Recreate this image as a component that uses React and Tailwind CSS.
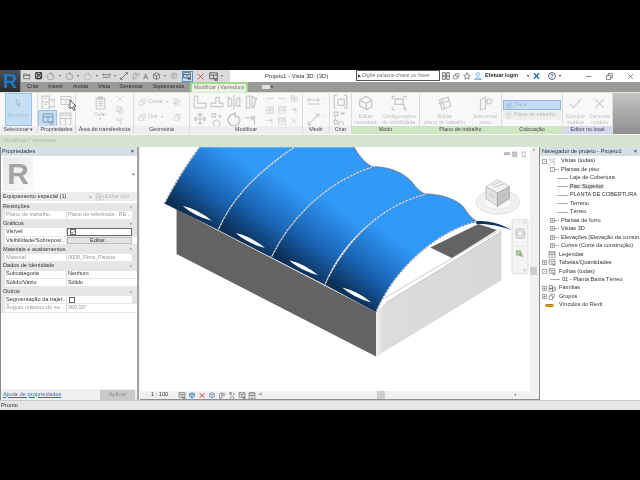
import React from 'react';

// tiny stroked glyph, most of the ribbon is greyed out
function Sk({ w = 12, h = 12, vb = '0 0 12 12', d, stroke = '#c8c8c8', fill = 'none', sw = 1 }) {
  return (
    <svg width={w} height={h} viewBox={vb} className="shrink-0 block">
      <path d={d} stroke={stroke} fill={fill} strokeWidth={sw} />
    </svg>
  );
}

const D = {
  docs: 'M1 1h6v5h-6zM7 4h5v6h-5zM1 6h6v6h-6zM3 3h2M3 8h2M9 6h2',
  panel: 'M1 1h10v8h-10zM1 4h10M6 4v5M8 9h3v3h-3z',
  grid: 'M1 1h10v11h-10zM1 6h10M6 6v6M1 3h10',
  paste: 'M2 2h8v10h-8zM4 1h4v2h-4zM4 5h4M4 7h4M4 9h4',
  cut: 'M2 2l8 8M10 2l-8 8',
  copy: 'M1 1h6v7h-6zM4 4h6v7h-6z',
  brush: 'M2 2h7v3h-7zM5 5v2l3 1-1 4',
  shapes: 'M1 5h6v6h-6zM4 5v-3h6v6h-3',
  align: 'M1 1h3v6h7v4h-10z',
  offset: 'M1 10v-3h4v-5h3v5h3v3z',
  mirror: 'M6 0v12M1 2l3 2v5l-3 1zM11 2l-3 2v5l3 1z',
  split: 'M2 1h3v10h-3zM7 1l3 2-1 7-2 1zM8 11l3-9',
  move: 'M6 1v10M1 6h10M6 1l-2 2M6 1l2 2M6 11l-2-2M6 11l2-2M1 6l2-2M1 6l2 2M11 6l-2-2M11 6l-2 2',
  copy2: 'M2 1h3v3h-3zM8 2l2 2-2 0M6 7a3 3 0 1 0 .1 0z',
  rotate: 'M10 4a5 5 0 1 1-3-2M7 0v4h3',
  trim: 'M1 5h8M9 3v8M6 3l3 2-3 2',
  arrows: 'M1 6h10M1 6l2-2M1 6l2 2M11 6l-2-2M11 6l-2 2',
  mini: 'M1 1h4v10h-4zM7 1h4v10h-4zM1 6h4M7 6h4',
  x: 'M2 2l8 8M10 2l-8 8',
  measure: 'M0 4h12M0 4l2-2M0 4l2 2M12 4l-2-2M12 4l-2 2M0 8h12',
  diag: 'M1 11l10-10M1 8v3h3M8 1h3v3',
  comp: 'M1 1h2M9 1h2M1 1v10M11 1v10M1 11h2M9 11h2M4 4h5v5h-5z',
  create: 'M1 1h3v3h-3zM6 2h4M8 1l2 1-2 1M2 5v3M1 8h3v3h-3zM7 9a2 2 0 1 0 .1 0z',
  sweep: 'M2 4l5-3 4 3v5l-4 2-5-3zM2 4l5 2 4-2M7 6v5',
  vis: 'M1 3v-2h2M9 1h2v2M1 9v2h2M3 3h6v4h-6zM9 6l2 5-2-1',
  plane: 'M2 3l7-2 2 7-7 3zM4 2l2 8M1 6l9-2',
  selnew: 'M2 3l4-2v9l-4 1zM7 4a2 2 0 1 1 3 2 2 2 0 0 1-3-2z',
  folder: 'M1 3h3l1 1h5v6h-9zM1 5h9',
  save: 'M1 1h9v9h-9zM3 1v3h5v-3M3 6h5v4h-5z',
  cube: 'M6 1l4 2v5l-4 2-4-2v-5zM2 3l4 2 4-2M6 5v5',
};

const tabs = ['Criar', 'Inserir', 'Anotar', 'Vista', 'Gerenciar', 'Suplementos'];

function Panel({ w, label, tint = 'bg-[#eeeeee]', children }) {
  return (
    <div className={`${w} shrink-0 flex flex-col border-r border-[#dcdcdc]`}>
      <div className="h-[34px] flex overflow-hidden">{children}</div>
      <div className={`${tint} h-[8px] flex items-center justify-center text-[#4a4a4a] text-[5.4px] whitespace-nowrap`}>{label}</div>
    </div>
  );
}

function BigBtn({ d, l1, l2, w = 'w-[34px]', size = 14 }) {
  return (
    <div className={`${w} flex flex-col items-center text-[#bdbdbd] text-[5.3px] leading-[6px] whitespace-nowrap`}>
      <div className="h-[20px] flex items-center"><Sk w={size} h={size} d={d} /></div>
      <div>{l1}</div>
      <div>{l2}</div>
    </div>
  );
}

function Ribbon() {
  return (
    <div className="h-[42px] flex bg-[#f8f8f8] border-t border-[#d9e8cf]">
      <Panel w="w-[38px]" label="Selecionar ▾">
        <div className="mx-[5px] w-[28px] h-[33px] bg-[#c5def6] border border-[#98c2ea] flex flex-col items-center pt-[4px] gap-[5px] text-[#a9bfd4] text-[5.2px]">
          <Sk w={9} h={10} d="M3 1v8l2-2 2 4 1-1-2-3h3z" stroke="#9db4c9" />
          <span>Modificar</span>
        </div>
      </Panel>
      <Panel w="w-[38px]" label="Propriedades">
        <div className="grid grid-cols-[19px_17px] grid-rows-[17px_17px] w-full">
          <div className="flex justify-center items-center"><Sk w={14} h={14} d={D.docs} /></div>
          <div className="flex justify-center items-center"><Sk w={12} h={13} d={D.panel} /></div>
          <div className="bg-[#c5def6] border border-[#98c2ea] flex justify-center items-center"><Sk w={12} h={12} d={D.panel} stroke="#7e97ad" /></div>
          <div className="flex justify-center items-center"><Sk w={13} h={13} d={D.grid} /></div>
        </div>
      </Panel>
      <Panel w="w-[58px]" label="Área de transferência">
        <div className="w-[38px] pl-[10px] text-[#bbb] text-[5.3px] flex flex-col items-center pt-[1px]">
          <Sk w={13} h={17} d={D.paste} />
          <span className="mt-[1px]">Colar</span>
          <span className="text-[4px]">▾</span>
        </div>
        <div className="flex flex-col gap-[3px] pt-[2px] pl-[2px]">
          <Sk w={8} h={8} d={D.cut} />
          <Sk w={8} h={8} d={D.copy} />
          <Sk w={8} h={8} d={D.brush} />
        </div>
      </Panel>
      <Panel w="w-[56px]" label="Geometria">
        <div className="flex flex-col gap-[7px] pt-[5px] pl-[4px] text-[#bbb] text-[5.4px] w-[36px]">
          <div className="flex items-center gap-[1px]"><Sk w={9} h={8} d={D.shapes} /><span>Cortar</span><span className="text-[4px] ml-[2px]">▾</span></div>
          <div className="flex items-center gap-[1px]"><Sk w={9} h={8} d={D.shapes} /><span>Unir</span><span className="text-[4px] ml-[2px]">▾</span></div>
        </div>
        <div className="flex flex-col gap-[7px] pt-[5px] pl-[3px]">
          <Sk w={8} h={8} d={D.copy} />
          <Sk w={9} h={8} d={D.shapes} />
        </div>
      </Panel>
      <Panel w="w-[113px]" label="Modificar">
        <div className="grid grid-cols-[repeat(4,17px)] gap-y-[2px] pl-[3px] pt-[2px] w-[72px]">
          <Sk w={14} h={14} d={D.align} />
          <Sk w={14} h={14} d={D.offset} />
          <Sk w={14} h={14} d={D.mirror} />
          <Sk w={14} h={14} d={D.split} />
          <Sk w={14} h={14} d={D.move} />
          <Sk w={13} h={14} d={D.copy2} />
          <Sk w={14} h={14} d={D.rotate} sw={1.4} />
          <Sk w={14} h={14} d={D.trim} />
        </div>
        <div className="grid grid-cols-[repeat(3,12px)] gap-y-[3px] pl-[4px] pt-[2px]">
          <Sk w={8} h={7} d={D.arrows} />
          <Sk w={8} h={7} d={D.arrows} />
          <Sk w={8} h={7} d={D.docs} />
          <Sk w={8} h={8} d={D.mini} />
          <Sk w={8} h={8} d={D.grid} />
          <Sk w={8} h={8} d={D.trim} />
          <Sk w={8} h={8} d={D.trim} />
          <Sk w={8} h={8} d={D.grid} />
          <Sk w={8} h={8} d={D.x} />
        </div>
      </Panel>
      <Panel w="w-[27px]" label="Medir">
        <div className="flex flex-col gap-[5px] pl-[3px] pt-[3px]">
          <div className="flex gap-[1px]"><Sk w={15} h={12} d={D.measure} /><span className="text-[5px] text-[#999]">-</span></div>
          <div className="flex gap-[1px]"><Sk w={15} h={13} d={D.diag} /><span className="text-[5px] text-[#999]">-</span></div>
        </div>
      </Panel>
      <Panel w="w-[22px]" label="Criar">
        <div className="flex flex-col gap-[2px] pl-[3px] pt-[1px]">
          <Sk w={15} h={15} d={D.comp} />
          <Sk w={14} h={14} d={D.create} />
        </div>
      </Panel>
      <Panel w="w-[68px]" label="Modo" tint="bg-[#cfe6c3]">
        <BigBtn d={D.sweep} l1="Editar" l2="varredura" w="w-[27px]" size={16} />
        <BigBtn d={D.vis} l1="Configurações" l2="de visibilidade" w="w-[41px]" size={16} />
      </Panel>
      <Panel w="w-[82px]" label="Plano de trabalho" tint="bg-[#cfe6c3]">
        <BigBtn d={D.plane} l1="Editar" l2="plano de trabalho" w="w-[50px]" size={15} />
        <BigBtn d={D.selnew} l1="Selecionar" l2="novo" w="w-[32px]" size={15} />
      </Panel>
      <Panel w="w-[61px]" label="Colocação" tint="bg-[#cfe6c3]">
        <div className="flex flex-col w-full pt-[7px] pl-[1px] pr-[1px] text-[5.3px] whitespace-nowrap">
          <div className="h-[10px] bg-[#c3dcf3] border border-[#8cb8e0] flex items-center gap-[2px] pl-[2px] text-[#9cb4c8]">
            <Sk w={7} h={7} d={D.plane} stroke="#9cb4c8" /><span>Face</span>
          </div>
          <div className="h-[10px] bg-[#efefef] flex items-center gap-[2px] pl-[2px] text-[#b8b8b8]">
            <Sk w={7} h={7} d={D.cube} /><span>Plano de trabalho</span>
          </div>
        </div>
      </Panel>
      <Panel w="w-[50px]" label="Editor no local" tint="bg-[#d5d9ef]">
        <BigBtn d="M1 6l3 4 7-8" l1="Concluir" l2="modelo" w="w-[25px]" size={13} />
        <BigBtn d={D.x} l1="Cancelar" l2="modelo" w="w-[25px]" size={13} />
      </Panel>
      <div className="flex-1 bg-gradient-to-b from-[#c4c4c4] to-[#8f8f8f]" />
    </div>
  );
}

const props = [
  { head: 'Restrições' },
  { k: 'Plano de trabalho', v: 'Plano de referência : RE...', dim: true },
  { head: 'Gráficos' },
  { k: 'Visível', check: true, on: true, active: true },
  { k: 'Visibilidade/Sobreposi...', button: 'Editar...' },
  { head: 'Materiais e acabamentos' },
  { k: 'Material', v: '0008_Fibra_Piscina', dim: true },
  { head: 'Dados de identidade' },
  { k: 'Subcategoria', v: 'Nenhum' },
  { k: 'Sólido/Vazio', v: 'Sólido' },
  { head: 'Outros' },
  { k: 'Segmentação da trajet...', check: true },
  { k: 'Ângulo máximo do se...', v: '360,00°', dim: true },
];

function Properties() {
  return (
    <div className="w-[137px] shrink-0 bg-white border-l border-[#8a8a8a] flex flex-col">
      <div className="h-[9px] bg-[#d5dfe6] flex items-center justify-between px-[1px] pr-[3px] text-[#333] text-[5.6px]">
        <span>Propriedades</span><span className="font-bold">×</span>
      </div>
      <div className="h-[36px] flex justify-between items-center pr-[2px]">
        <div className="w-[30px] h-[34px] ml-[2px] bg-gradient-to-br from-[#e8e8e8] to-[#fafafa] flex items-center justify-center text-[#a3a3a3] text-[30px] font-bold leading-none">R</div>
        <span className="text-[5px] text-[#777]">▾</span>
      </div>
      <div className="h-[9px] bg-[#ececec] flex items-center text-[5.6px] text-[#333] pl-[2px] whitespace-nowrap">
        <div className="w-[92px] flex justify-between pr-[2px]"><span>Equipamento especial (1)</span><span className="text-[#777]">⌄</span></div>
        <Sk w={9} h={8} d={D.docs} />
        <span className="ml-[1px] text-[#b5b5b5] text-[5.3px]">Editar tipo</span>
      </div>
      <div className="mt-[2px] flex flex-col text-[5.6px] text-[#333] whitespace-nowrap">
        {props.map((r) => r.head ? (
          <div key={r.head} className="h-[8.44px] bg-[#e6e6e6] flex items-center justify-between pl-[2px] pr-[5px]">
            <span>{r.head}</span><span className="text-[4px]">≈</span>
          </div>
        ) : (
          <div key={r.k} className="h-[8.44px] grid grid-cols-[4px_62px_65px_1fr] border-b border-[#e8e8e8]">
            <div className="bg-[#e6e6e6]" />
            <div className={`${r.dim ? 'text-[#9a9a9a]' : ''} overflow-hidden pl-[1px] border-r border-[#dcdcdc] flex items-center`}>{r.k}</div>
            {r.button ? (
              <div className="bg-[#e3e3e3] border border-[#bdbdbd] flex items-center justify-center">{r.button}</div>
            ) : (
              <div className={`${r.dim ? 'text-[#9a9a9a]' : ''} ${r.active ? 'border border-[#666]' : ''} overflow-hidden pl-[1px] tracking-[-0.12px] flex items-center`}>
                {r.check ? (
                  <span className="w-[6px] h-[6px] ml-[1px] bg-white border border-[#666] block">
                    {r.on && <Sk w={4} h={4} d="M1 6l3 4 7-8" stroke="#333" sw={2} />}
                  </span>
                ) : r.v}
              </div>
            )}
            <div className={r.k === 'Plano de trabalho' || r.k === 'Material' || r.k === 'Visível' || r.k.startsWith('Seg') ? 'bg-[#e2e2e2]' : 'bg-white'} />
          </div>
        ))}
      </div>
      <div className="flex-1" />
      <div className="h-[11px] bg-[#f0f0f0] flex items-center justify-between pl-[2px] pr-[2px] text-[5.8px]">
        <span className="text-[#2a73c4] underline">Ajuda de propriedades</span>
        <span className="w-[35px] h-[10px] bg-[#c9c9c9] text-[#8f8f8f] flex items-center justify-center">Aplicar</span>
      </div>
    </div>
  );
}

function Exp({ sign, cls }) {
  return (
    <span className={`${cls} w-[5px] h-[5px] border border-[#aaa] bg-white shrink-0 flex items-center justify-center text-[#555] text-[5px] leading-none`}>{sign}</span>
  );
}

const tree = [
  { lead: 'w-[21px]', exp: '-', ml: 'ml-[2px]', d: D.vis, text: 'Vistas (todas)' },
  { lead: 'w-[21px]', exp: '-', ml: 'ml-[10px]', dash: true, text: 'Plantas de piso' },
  { lead: 'w-[30px]', line: 'ml-[17px] w-[11px]', text: 'Laje de Cobertura' },
  { lead: 'w-[30px]', line: 'ml-[17px] w-[11px]', text: 'Pav. Superior', sel: true },
  { lead: 'w-[30px]', line: 'ml-[17px] w-[11px]', text: 'PLANTA DE COBERTURA' },
  { lead: 'w-[30px]', line: 'ml-[17px] w-[11px]', text: 'Terreno' },
  { lead: 'w-[30px]', line: 'ml-[17px] w-[11px]', text: 'Térreo' },
  { lead: 'w-[21px]', exp: '+', ml: 'ml-[10px]', dash: true, text: 'Plantas de forro' },
  { lead: 'w-[21px]', exp: '+', ml: 'ml-[10px]', dash: true, text: 'Vistas 3D' },
  { lead: 'w-[21px]', exp: '+', ml: 'ml-[10px]', dash: true, text: 'Elevações (Elevação da construção)' },
  { lead: 'w-[21px]', exp: '+', ml: 'ml-[10px]', dash: true, text: 'Cortes (Corte da construção)' },
  { lead: 'w-[19px]', spacer: true, d: D.grid, dark: true, text: 'Legendas' },
  { lead: 'w-[19px]', exp: '+', ml: 'ml-[2px]', d: D.panel, dark: true, text: 'Tabelas/Quantidades' },
  { lead: 'w-[19px]', exp: '-', ml: 'ml-[2px]', d: D.panel, dark: true, text: 'Folhas (todas)' },
  { lead: 'w-[22px]', line: 'ml-[10px] w-[10px]', text: '01 - Planta Baixa Térreo' },
  { lead: 'w-[19px]', exp: '+', ml: 'ml-[2px]', d: D.docs, dark: true, text: 'Famílias' },
  { lead: 'w-[19px]', exp: '+', ml: 'ml-[2px]', d: D.shapes, dark: true, text: 'Grupos' },
  { lead: 'w-[19px]', link: true, text: 'Vínculos do Revit' },
];

function Browser() {
  return (
    <div className="flex-1 bg-white border-l border-[#8a8a8a] flex flex-col overflow-hidden">
      <div className="h-[9px] bg-[#d5dfe6] flex items-center justify-between pl-[2px] pr-[3px] text-[#333] text-[5.6px] whitespace-nowrap">
        <span>Navegador de projeto - Projeto1</span><span className="font-bold">×</span>
      </div>
      <div className="pt-[1px] text-[5.6px] text-[#333] whitespace-nowrap">
        {tree.map((r) => (
          <div key={r.text} className="h-[8.47px] flex items-center">
            <div className={`${r.lead} shrink-0 flex items-center overflow-hidden`}>
              {r.exp && <Exp sign={r.exp} cls={r.ml} />}
              {r.spacer && <span className="w-[7px] shrink-0" />}
              {r.dash && <span className="w-[4px] border-t border-dotted border-[#999] shrink-0" />}
              {r.line && <span className={`${r.line} border-t border-[#aaa] shrink-0`} />}
              {r.d && <span className="ml-[1px] shrink-0"><Sk w={8} h={7} d={r.d} stroke={r.dark ? '#666' : '#999'} /></span>}
              {r.link && (
                <span className="ml-[5px] w-[9px] h-[3px] bg-[#e0a920] border border-[#a87f14] rounded-full shrink-0" />
              )}
            </div>
            <span className={r.sel ? 'bg-[#e6e6e6] px-[1px] -ml-[1px]' : ''}>{r.text}</span>
          </div>
        ))}
      </div>
    </div>
  );
}

const shells = [
  'M70,178 C100,120 130,70 175,9 L460,9 C380,60 300,130 232,258 Z',
  'M232,258 C270,170 330,100 460,9 L640,9 C655,35 670,55 695,68 C600,100 470,190 392,340 Z',
  'M392,340 C440,240 540,120 695,68 C745,68 790,85 815,115 C830,135 840,145 855,150 C760,170 610,270 553,422 Z',
  'M553,422 C600,320 700,190 855,150 C900,150 950,165 970,190 C985,215 1000,228 1010,232 C900,260 770,360 707,505 Z',
];

const seams = [
  'M70,178 C100,120 130,70 175,9',
  'M232,258 C270,170 330,100 460,9',
  'M392,340 C440,240 540,120 695,68',
  'M553,422 C600,320 700,190 855,150',
  'M707,505 C770,360 900,260 1010,232',
];

const backEdge = 'M640,9 C655,35 670,55 695,68 C745,68 790,85 815,115 C830,135 840,145 855,150 C900,150 950,165 970,190 C985,215 1000,228 1010,232';

function Model() {
  return (
    <svg viewBox="-3 9 1173 732" className="block w-full h-full">
      <defs>
        {[0, 1, 2, 3].map((i) => (
          <linearGradient key={i} id={`shell${i}`} gradientUnits="userSpaceOnUse"
            x1={150 + i * 160} y1={215 + i * 82} x2={310 + i * 160} y2={5 + i * 82}>
            <stop offset="0" stopColor="#0c2f57" />
            <stop offset="0.38" stopColor="#1a66b6" />
            <stop offset="0.85" stopColor="#3199f8" />
          </linearGradient>
        ))}
        <linearGradient id="side" x1="0" x2="1" y1="0" y2="0">
          <stop offset="0" stopColor="#efefef" />
          <stop offset="0.06" stopColor="#dcdcdc" />
          <stop offset="1" stopColor="#d8d8d8" />
        </linearGradient>
      </defs>

      {/* walls */}
      <polygon points="107,195 707,505 707,638 107,330" fill="#636363" />
      <polygon points="707,505 735,478 1082,264 1082,410 707,638" fill="url(#side)" />
      <polygon points="870,310 1015,240 1070,258 935,342" fill="#636363" />
      <path d="M732,463 L1082,256 M737,476 L1082,264" stroke="#b0b0b0" strokeWidth="2" fill="none" />
      <path d="M1082,258 V410" stroke="#b5b5b5" strokeWidth="1.5" />

      {/* roof */}
      <path d="M1005,232 C1040,226 1085,240 1115,258 C1080,245 1040,238 1010,240 Z" fill="#0f3560" />
      <path d={backEdge} stroke="#bbbbbb" strokeWidth="5" fill="none" />
      {shells.map((d, i) => <path key={d} d={d} fill={`url(#shell${i})`} />)}
      {[0, 1, 2, 3].map((i) => (
        <path key={i} transform={`translate(${i * 160},${i * 82})`}
          d="M125,185 Q172,196 213,230 Q160,216 125,185 Z" fill="white" />
      ))}
      {seams.map((d) => (
        <g key={d}>
          <path d={d} stroke="#eeeeee" strokeWidth="3.5" fill="none" />
          <path d={d} stroke="#222" strokeWidth="1.6" strokeDasharray="6 5" fill="none" />
        </g>
      ))}
      <path d={backEdge} stroke="#1c2b3c" strokeWidth="1.2" strokeDasharray="7 3" fill="none" />

      {/* view cube and navigation bar, coords from the corner crop */}
      <g transform="translate(810,9)">
        <ellipse cx="263" cy="165" rx="65" ry="36" fill="#f1f1f1" stroke="#d0d0d0" strokeWidth="2" />
        <ellipse cx="263" cy="165" rx="42" ry="21" fill="#fbfbfb" stroke="#dddddd" strokeWidth="2" />
        <polygon points="228,118 262,97 298,118 262,138" fill="#f4f4f4" stroke="#9a9a9a" strokeWidth="1.5" />
        <polygon points="228,118 262,138 262,178 228,155" fill="#e2e2e2" stroke="#9a9a9a" strokeWidth="1.5" />
        <polygon points="298,118 262,138 262,178 298,155" fill="#c4c4c4" stroke="#8a8a8a" strokeWidth="1.5" />
        <path d="M245,115 L270,104 M250,121 L280,110 M238,140 L252,150 M272,150 L288,140" stroke="#aaa" strokeWidth="2" />
        <rect x="306" y="217" width="48" height="163" rx="5" fill="#f4f4f4" stroke="#cfcfcf" strokeWidth="2" />
        <rect x="318" y="246" width="26" height="28" rx="7" fill="none" stroke="#999" strokeWidth="2" />
        <rect x="323" y="252" width="16" height="16" rx="5" fill="none" stroke="#aaa" strokeWidth="2" />
        <path d="M314,298 H346" stroke="#d0d0d0" strokeWidth="1.5" />
        <rect x="318" y="310" width="15" height="15" fill="#a8cc98" stroke="#8fb080" />
        <circle cx="333" cy="323" r="4" fill="none" stroke="#777" strokeWidth="2" />
        <path d="M336,326 L341,331" stroke="#777" strokeWidth="2" />
        <circle cx="344" cy="226" r="3" fill="none" stroke="#aaa" strokeWidth="1.5" />
        <circle cx="344" cy="370" r="3" fill="none" stroke="#aaa" strokeWidth="1.5" />
        <path d="M283,16 h16 v6 h-16z M308,14 h12 v14 h-12z M334,14 h14 M334,28 h14 M337,14 v14 M345,14 v14" fill="#c9c9c9" stroke="#888" strokeWidth="1.5" />
      </g>
    </svg>
  );
}

export default function App() {
  return (
    <div className="w-[640px] h-[480px] bg-black flex flex-col font-['Liberation_Sans',sans-serif] leading-none overflow-hidden relative">
      <div className="h-[70px] shrink-0" />
      <div className="h-[340px] shrink-0 bg-[#f0f0f0] flex flex-col blur-[0.3px]">
        {/* title bar and tabs, the app button spans both */}
        <div className="h-[22px] flex">
          <div className="w-[21px] h-[22px] bg-gradient-to-b from-[#4a525a] to-[#2a2a2a] shrink-0 flex items-center justify-center text-[#1f78c8] text-[20px] font-bold border-r border-[#888]">R</div>
          <div className="flex-1 flex flex-col min-w-0">
            <div className="h-[12px] flex bg-white">
              <div className="w-[209px] bg-[#d9dadb] flex items-center gap-[3.7px] pl-[2px]">
                <Sk w={8} h={8} d={D.folder} stroke="#555" />
                <Sk w={8} h={8} d={D.save} stroke="#222" sw={1.4} />
                <Sk w={9} h={8} d={D.rotate} stroke="#888" />
                <span className="text-[4px] text-[#666]">▾</span>
                <Sk w={9} h={8} d={D.rotate} stroke="#888" />
                <span className="text-[4px] text-[#666]">▾</span>
                <Sk w={9} h={8} d={D.rotate} stroke="#aaa" />
                <span className="text-[4px] text-[#666]">▾</span>
                <Sk w={9} h={8} d={D.measure} stroke="#666" />
                <span className="text-[4px] text-[#666]">▾</span>
                <Sk w={8} h={8} d={D.diag} stroke="#555" />
                <Sk w={8} h={8} d={D.selnew} stroke="#999" />
                <span className="text-[7px] text-[#666]">A</span>
                <Sk w={9} h={9} d={D.cube} stroke="#666" />
                <span className="text-[4px] text-[#666]">▾</span>
                <Sk w={8} h={8} d={D.cube} stroke="#999" />
                <span className="w-[11px] h-[11px] bg-[#cfe3f7] border border-[#4f93d6] flex items-center justify-center"><Sk w={8} h={8} d={D.panel} stroke="#234" /></span>
                <Sk w={9} h={9} d={D.x} stroke="#c33" />
                <Sk w={9} h={9} d={D.panel} stroke="#444" />
                <span className="text-[4px] text-[#666] -ml-[1px]">▾</span>
              </div>
              <div className="w-[126px] pl-[35px] pt-[1px] flex items-center text-[5.8px] text-[#333] whitespace-nowrap">Projeto1 - Vista 3D: {'{3D}'}</div>
              <div className="w-[84px] h-[11px] border border-[#555] bg-white flex items-center pl-[1px] text-[#777] italic text-[5.2px] whitespace-nowrap">
                <span className="not-italic text-[4px] mr-[1px] text-[#333]">▶</span>Digite palavra-chave ou frase
              </div>
              <div className="flex items-center pl-[2px] gap-[3px] text-[5.4px] text-[#222] whitespace-nowrap">
                <Sk w={8} h={8} d={D.mini} stroke="#333" />
                <Sk w={7} h={8} d={D.shapes} stroke="#555" />
                <Sk w={8} h={8} d="M6 1l1.5 3.5 3.5.5-2.5 2.5.5 3.5-3-2-3 2 .5-3.5L1 5l3.5-.5z" stroke="#555" />
                <Sk w={8} h={8} d="M6 1a2.5 2.5 0 1 1-.1 0zM1 11c1-3 9-3 10 0z" stroke="#2d7fc4" />
                <span className="font-bold">Efetuar login</span>
                <span className="text-[4px] ml-[6px]">▾</span>
                <Sk w={9} h={8} d={D.x} stroke="#1e6fb8" sw={2} />
                <span className="w-[8px] h-[8px] ml-[4px] rounded-full border border-[#666] text-[#2d5fc0] text-[6px] font-bold flex items-center justify-center">?</span>
                <span className="text-[4px]">▾</span>
              </div>
              <div className="flex-1 flex items-center justify-end gap-[14px] pr-[6px]">
                <Sk w={7} h={7} d="M1 6h10" stroke="#333" />
                <Sk w={7} h={7} d="M1 4h7v7h-7zM4 4v-3h7v7h-3" stroke="#333" />
                <Sk w={7} h={7} d={D.x} stroke="#333" />
              </div>
            </div>
            <div className="h-[10px] bg-[#9a9a9a] flex items-end text-[#2c2c2c] text-[5.4px] whitespace-nowrap">
              <div className="w-[6px]" />
              <div className="flex gap-[9.5px] w-[163px] h-full items-center">
                {tabs.map((t) => <span key={t}>{t}</span>)}
              </div>
              <div className="w-[58px] h-full bg-[#eaf3e3] border-2 border-b-0 border-[#a5d68a] text-[#767676] flex items-center justify-center">Modificar | Varredura</div>
              <div className="ml-[14px] h-full flex items-center gap-[1px]">
                <span className="w-[8px] h-[4px] bg-[#e2e2e2] rounded-[1px]" />
                <span className="text-[4px]">▾</span>
              </div>
            </div>
          </div>
        </div>
        <Ribbon />
        {/* context bar */}
        <div className="h-[13px] bg-[#d5e4ce] border-t border-[#f4f4f4] flex items-center pl-[4px] text-[#aab9a5] text-[5.6px]">Modificar | Varredura</div>
        {/* main */}
        <div className="flex-1 flex min-h-0">
          <Properties />
          <div className="w-[2px] bg-[#a3a3a3] shrink-0" />
          <div className="w-[400px] shrink-0 flex flex-col bg-[#d8d8d8] border-l border-[#f0f0f0]">
            <div className="flex-1 flex min-h-0">
              <div className="w-[390px] shrink-0 bg-white"><Model /></div>
              <div className="flex-1 bg-[#f0f0f0] flex flex-col items-start">
                <span className="w-[7px] text-center text-[5px] text-[#333] pt-[2px]">⌃</span>
                <div className="mt-[113px] w-[7px] h-[8px] bg-[#cdcdcd]" />
              </div>
            </div>
            <div className="h-[8px] bg-[#f0f0f0] flex items-center text-[5.6px] text-[#333] whitespace-nowrap">
              <span className="ml-[11px]">1 : 100</span>
              <div className="ml-[10px] flex items-center gap-[2px]">
                <Sk w={8} h={7} d={D.panel} stroke="#555" />
                <Sk w={8} h={7} d={D.cube} stroke="#2b7fb8" sw={1.5} />
                <Sk w={8} h={7} d={D.x} stroke="#c22" sw={1.5} />
                <Sk w={8} h={7} d={D.cube} stroke="#3c6cc0" />
                <Sk w={8} h={7} d={D.selnew} stroke="#555" />
                <Sk w={8} h={7} d={D.copy2} stroke="#555" />
                <Sk w={8} h={7} d={D.panel} stroke="#555" />
                <Sk w={8} h={7} d={D.grid} stroke="#555" />
                <span className="ml-[1px]">&lt;</span>
              </div>
              <div className="ml-[115px] w-[8px] h-[8px] bg-[#cdcdcd]" />
              <span className="ml-[129px]">›</span>
            </div>
            <div className="h-[1px] bg-[#8f8f8f]" />
          </div>
          <Browser />
        </div>
        {/* status */}
        <div className="h-[10px] bg-[#e6e6e6] border-t border-[#c9c9c9] flex items-center pl-[1px] text-[#333] text-[5.8px]">Pronto</div>
      </div>
      <div className="flex-1" />
      {/* mouse pointer */}
      <svg width="8" height="11" viewBox="0 0 8 11" className="absolute left-[69px] top-[100px]">
        <path d="M1 0v9l2-2 1.6 3.4 1.4-.7L4.5 6.4 7 6z" fill="white" stroke="#333" strokeWidth="0.8" />
      </svg>
    </div>
  );
}
